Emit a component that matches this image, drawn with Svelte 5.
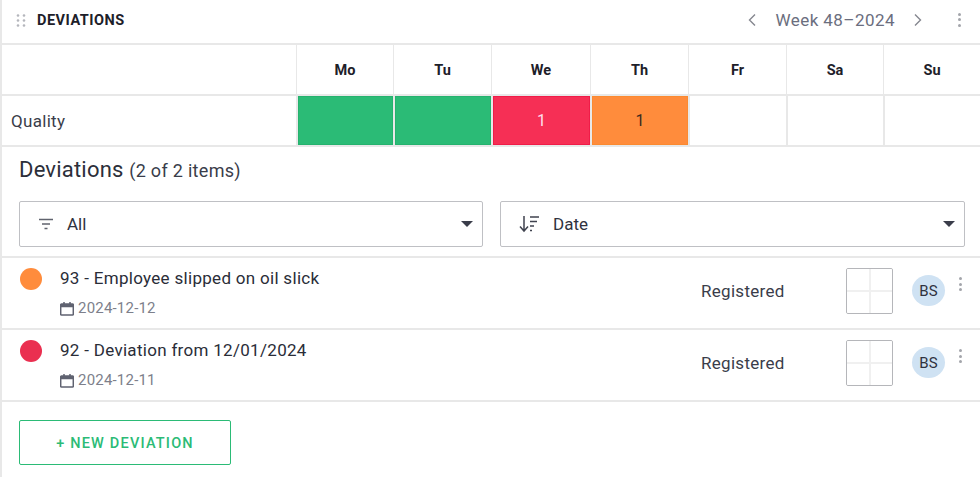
<script>
  const days = [
    { name: "Mo", cls: "green" },
    { name: "Tu", cls: "green" },
    { name: "We", cls: "red", count: 1 },
    { name: "Th", cls: "orange", count: 1 },
    { name: "Fr" },
    { name: "Sa" },
    { name: "Su" }
  ];

  const items = [
    { title: "93 - Employee slipped on oil slick", date: "2024-12-12", color: "orange" },
    { title: "92 - Deviation from 12/01/2024", date: "2024-12-11", color: "red" }
  ];
</script>

<div class="widget">
  <header class="top">
    <div class="top-left">
      <svg class="drag" width="10" height="14" viewBox="0 0 10 14">
        {#each [1.5, 6.5, 11.5] as y}
          <circle cx="2" cy={y} r="1.3" />
          <circle cx="8" cy={y} r="1.3" />
        {/each}
      </svg>
      <h1>DEVIATIONS</h1>
    </div>
    <div class="week">
      <svg width="10" height="14" viewBox="0 0 10 14"><path d="M8 1.500 2.500 7 8 12.500" /></svg>
      <span>Week 48–2024</span>
      <svg width="10" height="14" viewBox="0 0 10 14"><path d="M2 1.500 7.500 7 2 12.500" /></svg>
      <span class="dots big"><i></i><i></i><i></i></span>
    </div>
  </header>

  <div class="grid">
    <div class="cell head"></div>
    {#each days as d}
      <div class="cell head">{d.name}</div>
    {/each}
    <div class="cell label">Quality</div>
    {#each days as d}
      <div class="cell day {d.cls ?? ''}">{d.count ?? ""}</div>
    {/each}
  </div>

  <section class="panel">
    <h2>Deviations <small>(2 of 2 items)</small></h2>
    <div class="filters">
      <div class="select">
        <svg class="ficon" width="16" height="12" viewBox="0 0 16 12"><path d="M1 1.500h14M4 6h8M6.500 10.500h3" /></svg>
        <span>All</span>
        <b class="caret"></b>
      </div>
      <div class="select">
        <svg class="ficon sort" width="21" height="18" viewBox="0 0 21 18">
          <path d="M5 1v14M1 11.500l4 4.500 4-4.500M11 2h9M11 6.500h7M11 11h4M11 15.500h2" />
        </svg>
        <span>Date</span>
        <b class="caret"></b>
      </div>
    </div>
  </section>

  <ul class="list">
    {#each items as item}
      <li>
        <span class="status {item.color}"></span>
        <div class="info">
          <div class="title">{item.title}</div>
          <div class="date">
            <svg width="14" height="15" viewBox="0 0 14 15">
              <path d="M1.500 3h11a.8.8 0 0 1 .8.8v9.400a.8.8 0 0 1-.8.8h-11a.8.8 0 0 1-.8-.8V3.800a.8.8 0 0 1 .8-.8zM1 5.500h12M1 4h12M4 1v3M10 1v3" />
            </svg>
            {item.date}
          </div>
        </div>
        <div class="state">Registered</div>
        <div class="matrix"><i></i><i></i><i></i><i></i></div>
        <div class="avatar">BS</div>
        <span class="dots"><i></i><i></i><i></i></span>
      </li>
    {/each}
  </ul>

  <div class="actions">
    <button>+ NEW DEVIATION</button>
  </div>
</div>

<style>
  :global(body) {
    margin: 0;
    background: #fff;
  }

  .widget {
    width: 980px;
    height: 477px;
    box-sizing: border-box;
    border-left: 2px solid #e8e8e8;
    font-family: Roboto, "Liberation Sans", sans-serif;
    color: #2c2f3a;
    overflow: hidden;
  }

  .top {
    height: 41px;
    padding: 0 19px 2px 14px;
    display: flex;
    align-items: center;
    justify-content: space-between;
    border-bottom: 2px solid #e8e8e8;
  }

  .top-left {
    display: flex;
    align-items: center;
    gap: 11px;
  }

  .drag circle {
    fill: #b4b6bc;
  }

  h1 {
    margin: 0;
    font-size: 14.500px;
    font-weight: 700;
    letter-spacing: 0.5px;
    color: #1d2029;
  }

  .week {
    display: flex;
    align-items: center;
    gap: 18px;
    padding-bottom: 2px;
    color: #6b6e7e;
    font-size: 17px;
    letter-spacing: 0.45px;
  }

  .week svg path {
    fill: none;
    stroke: #85878f;
    stroke-width: 1.4;
  }

  .dots {
    display: flex;
    flex-direction: column;
    gap: 2.5px;
    width: 3px;
  }

  .dots i {
    display: block;
    width: 3px;
    height: 3px;
    border-radius: 50%;
    background: #a3a5ab;
  }

  .big {
    margin-left: 17px;
  }

  .grid {
    display: grid;
    grid-template-columns: 294px 97px 98px 99px 98px 98px 97px 97px;
    grid-template-rows: 51px 49px;
    border-bottom: 2px solid #e8e8e8;
  }

  .cell {
    display: flex;
    align-items: center;
    justify-content: center;
    box-sizing: border-box;
    border-left: 1px solid #e8e8e8;
    font-size: 14px;
  }

  .cell:first-child,
  .label {
    border-left: 0;
  }

  .head {
    padding-top: 2px;
    font-size: 14.500px;
    font-weight: 700;
    color: #1d2029;
    border-bottom: 2px solid #e8e8e8;
  }

  .label {
    justify-content: flex-start;
    padding: 1px 0 0 9px;
    font-size: 17px;
    letter-spacing: 0.3px;
    color: #3a3d4a;
  }

  .day {
    border-left-width: 2px;
    font-size: 16px;
    background-clip: padding-box;
  }

  .day.green {
    background-color: #2bbb76;
    box-shadow: inset 0 0 0 1px #25b26e;
  }

  .day.red {
    background-color: #f62f55;
    box-shadow: inset 0 0 0 1px #f01c48;
    color: #fde;
  }

  .day.orange {
    background-color: #ff8c3c;
    box-shadow: inset 0 0 0 1px #fb8a30;
    color: #3c2a20;
  }

  .panel {
    padding: 10px 14px 9px 17px;
    border-bottom: 2px solid #e8e8e8;
  }

  h2 {
    margin: 0;
    font-size: 22px;
    font-weight: 400;
    letter-spacing: 0.2px;
    line-height: 26px;
    color: #2c2f3a;
  }

  h2 small {
    font-size: 18px;
    letter-spacing: 0.3px;
    color: #3a3d4a;
  }

  .filters {
    display: grid;
    grid-template-columns: 464px 465px;
    gap: 17px;
    margin-top: 17px;
  }

  .select {
    height: 46px;
    box-sizing: border-box;
    border: 1px solid #bfc0c4;
    border-radius: 2px;
    display: flex;
    align-items: center;
    gap: 13px;
    padding: 0 9px 0 18px;
    font-size: 17px;
    color: #2f3240;
  }

  .select span {
    flex: 1;
  }

  .ficon {
    flex: none;
  }

  .ficon path {
    fill: none;
    stroke: #60636e;
    stroke-width: 1.3;
  }

  .ficon.sort path {
    stroke: #40434f;
    stroke-width: 1.5;
  }

  .caret {
    width: 0;
    height: 0;
    border-left: 6px solid transparent;
    border-right: 6px solid transparent;
    border-top: 6px solid #3a3d4a;
  }

  .list {
    list-style: none;
    margin: 0;
    padding: 0;
  }

  .list li {
    height: 70px;
    display: flex;
    align-items: flex-start;
    padding: 0 17px 0 18px;
    border-bottom: 2px solid #e8e8e8;
  }

  .status {
    flex: none;
    width: 22px;
    height: 22px;
    border-radius: 50%;
    margin-top: 10px;
  }

  .status.orange {
    background: #ff8c3c;
  }

  .status.red {
    background: #ea2f50;
  }

  .info {
    width: 641px;
    margin-left: 18px;
  }

  .title {
    font-size: 17px;
    letter-spacing: 0.3px;
    line-height: 20px;
    margin-top: 10px;
    color: #2a2d38;
  }

  .date {
    display: flex;
    align-items: center;
    gap: 4px;
    margin-top: 11px;
    font-size: 15px;
    letter-spacing: 0.2px;
    line-height: 18px;
    color: #7d7f8b;
  }

  .date svg path {
    fill: none;
    stroke: #5f6270;
    stroke-width: 1.500;
  }

  .state {
    width: 145px;
    margin-top: 23px;
    font-size: 17px;
    letter-spacing: 0.3px;
    line-height: 20px;
    color: #3a3d4a;
  }

  .matrix {
    flex: none;
    width: 47px;
    height: 46px;
    margin-top: 10px;
    box-sizing: border-box;
    border: 1px solid #b5b6ba;
    border-radius: 2px;
    display: grid;
    grid-template-columns: 1fr 1fr;
    grid-template-rows: 1fr 1fr;
    gap: 2px;
    background: #f0f0f0;
    overflow: hidden;
  }

  .matrix i {
    background: #fff;
  }

  .avatar {
    flex: none;
    width: 33px;
    height: 31px;
    margin: 17px 0 0 19px;
    border-radius: 50%;
    background: #cfe2f3;
    display: flex;
    align-items: center;
    justify-content: center;
    font-size: 15px;
    color: #2f3240;
  }

  .list .dots {
    margin: 19px 0 0 14px;
    flex: none;
  }

  .actions {
    padding: 18px 17px 0;
  }

  button {
    width: 212px;
    height: 45px;
    padding: 2px 0 0;
    border: 1.500px solid #2bbb76;
    border-radius: 2px;
    background: #fff;
    color: #2bbb76;
    font-family: inherit;
    font-size: 14.500px;
    font-weight: 500;
    letter-spacing: 1.2px;
  }
</style>
